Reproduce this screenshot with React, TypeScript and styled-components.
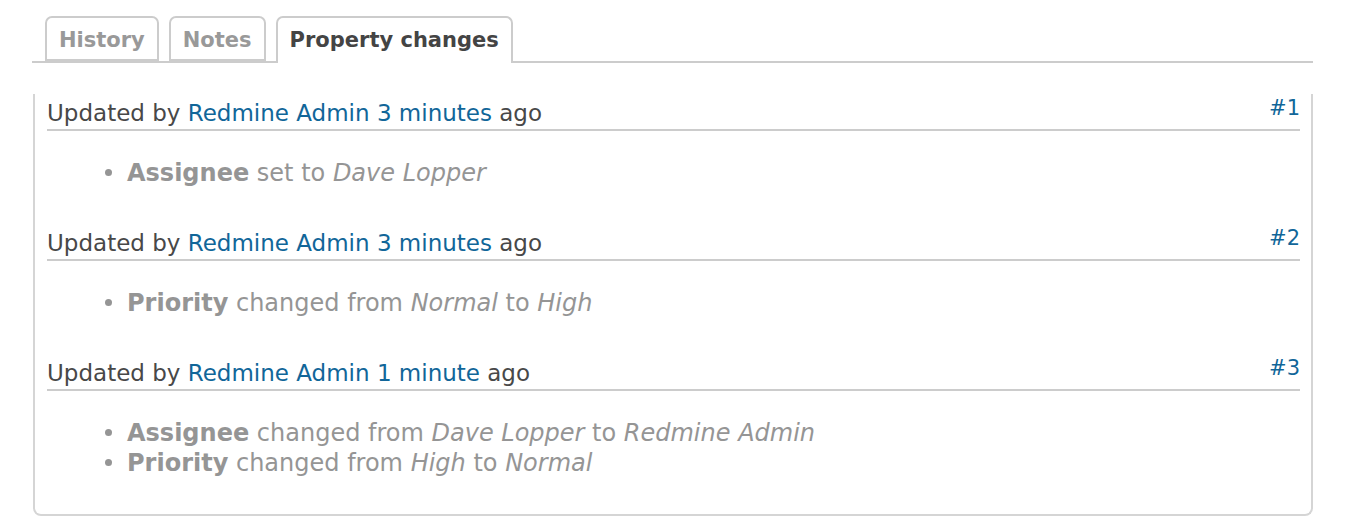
import React from "react";
import styled, { createGlobalStyle } from "styled-components";

const Global = createGlobalStyle`
  html, body { margin: 0; padding: 0; background: #fff; }
  body { font-family: "DejaVu Sans", Verdana, sans-serif; color: #484848; }
`;

const Page = styled.div`
  padding: 16px 33px 0 32px;
`;

const TabBar = styled.ul`
  display: flex;
  align-items: flex-start;
  gap: 10px;
  list-style: none;
  margin: 0;
  padding: 0 0 0 13px;
  border-bottom: 2px solid #cccccc;
  height: 45px;
`;

const Tab = styled.li<{ $active?: boolean }>`
  box-sizing: border-box;
  height: ${(p) => (p.$active ? "47px" : "45px")};
  padding: 9px 12px 0;
  border: 2px solid #cccccc;
  border-bottom: ${(p) => (p.$active ? "none" : "2px solid #cccccc")};
  border-radius: 7px 7px 0 0;
  background: #fff;
  font-weight: bold;
  font-size: 21px;
  line-height: 26px;
  color: ${(p) => (p.$active ? "#444444" : "#999999")};
`;

const Box = styled.div`
  margin-top: 31px;
  margin-left: 1px;
  border: 2px solid #d5d5d5;
  border-top: none;
  border-radius: 0 0 8px 8px;
  padding: 0 11px 0 12px;
`;

const Journal = styled.div``;

const Header = styled.h4`
  position: relative;
  margin: 0;
  font-weight: normal;
  font-size: 23px;
  line-height: 32px;
  padding-top: 3px;
  border-bottom: 2px solid #cccccc;
  color: #484848;
`;

const Link = styled.a`
  color: #116699;
  text-decoration: none;
`;

const JournalLink = styled.a`
  position: absolute;
  right: 0;
  top: -2px;
  font-size: 21px;
  color: #116699;
  text-decoration: none;
`;

const Details = styled.ul`
  margin: 0;
  padding: 27px 0 36px 58px;
  list-style: none;
  color: #959595;
  font-size: 24px;
  line-height: 30px;
`;

const Item = styled.li`
  &::before {
    content: "";
    display: inline-block;
    width: 7px;
    height: 7px;
    border-radius: 50%;
    background: #959595;
    margin-right: 15px;
    vertical-align: middle;
    position: relative;
    top: -2px;
  }
`;

type Detail = { prop: string; text: React.ReactNode };

const journals: { who: string; when: string; n: number; details: Detail[] }[] = [
  {
    who: "Redmine Admin",
    when: "3 minutes",
    n: 1,
    details: [{ prop: "Assignee", text: <> set to <i>Dave Lopper</i></> }],
  },
  {
    who: "Redmine Admin",
    when: "3 minutes",
    n: 2,
    details: [
      { prop: "Priority", text: <> changed from <i>Normal</i> to <i>High</i></> },
    ],
  },
  {
    who: "Redmine Admin",
    when: "1 minute",
    n: 3,
    details: [
      {
        prop: "Assignee",
        text: <> changed from <i>Dave Lopper</i> to <i>Redmine Admin</i></>,
      },
      { prop: "Priority", text: <> changed from <i>High</i> to <i>Normal</i></> },
    ],
  },
];

export default function App() {
  return (
    <Page>
      <Global />
      <TabBar>
        <Tab>History</Tab>
        <Tab>Notes</Tab>
        <Tab $active>Property changes</Tab>
      </TabBar>
      <Box>
        {journals.map((j) => (
          <Journal key={j.n}>
            <Header>
              Updated by <Link href="#">{j.who}</Link> <Link href="#">{j.when}</Link> ago
              <JournalLink href="#">#{j.n}</JournalLink>
            </Header>
            <Details>
              {j.details.map((d, i) => (
                <Item key={i}>
                  <b>{d.prop}</b>
                  {d.text}
                </Item>
              ))}
            </Details>
          </Journal>
        ))}
      </Box>
    </Page>
  );
}
